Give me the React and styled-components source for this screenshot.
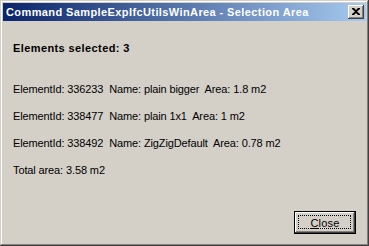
import React from "react";
import styled, { createGlobalStyle } from "styled-components";

const GlobalStyle = createGlobalStyle`
  html, body {
    margin: 0;
    padding: 0;
    background: #d4d0c8;
  }
`;

const Window = styled.div`
  box-sizing: border-box;
  width: 369px;
  height: 246px;
  padding: 3px;
  background: #d4d0c8;
  box-shadow: inset -1px -1px #404040, inset 1px 1px #d4d0c8,
    inset -2px -2px #808080, inset 2px 2px #ffffff;
  display: flex;
  flex-direction: column;
  font-family: "Liberation Sans", Tahoma, sans-serif;
  font-size: 11px;
  color: #000;
`;

const TitleBar = styled.div`
  height: 18px;
  display: flex;
  align-items: center;
  justify-content: space-between;
  padding: 0 2px 0 3px;
  background: linear-gradient(to right, #0a246a, #a6caf0);
`;

const TitleText = styled.span`
  color: #fff;
  font-weight: bold;
  font-size: 11px;
  letter-spacing: 0.4px;
  white-space: nowrap;
`;

const CaptionButton = styled.div`
  box-sizing: border-box;
  width: 16px;
  height: 14px;
  background: #d4d0c8;
  box-shadow: inset -1px -1px #404040, inset 1px 1px #ffffff,
    inset -2px -2px #808080;
  display: flex;
  align-items: center;
  justify-content: center;
  padding: 0 1px 1px 0;
`;

const Body = styled.div`
  flex: 1;
  display: flex;
  flex-direction: column;
  padding: 21px 10px 9px 10px;
`;

const Heading = styled.div`
  font-weight: bold;
  line-height: 13px;
  letter-spacing: 0.4px;
  margin-bottom: 28px;
`;

const Row = styled.div`
  line-height: 13px;
  margin-bottom: 14px;
  letter-spacing: -0.12px;
  white-space: pre;
`;

const Footer = styled.div`
  margin-top: auto;
  display: flex;
  justify-content: flex-end;
`;

const Button = styled.button`
  box-sizing: border-box;
  width: 62px;
  height: 23px;
  padding: 0;
  border: 1px solid #000;
  background: #d4d0c8;
  box-shadow: inset -1px -1px #404040, inset 1px 1px #ffffff,
    inset -2px -2px #808080;
  font-family: inherit;
  font-size: 11px;
  letter-spacing: 0.2px;
  color: #000;
  position: relative;
  display: flex;
  align-items: center;
  justify-content: center;
  &::after {
    content: "";
    position: absolute;
    left: 3px;
    top: 3px;
    right: 4px;
    bottom: 4px;
    border: 1px dotted #000;
  }
`;

const rows = [
  "ElementId: 336233  Name: plain bigger  Area: 1.8 m2",
  "ElementId: 338477  Name: plain 1x1  Area: 1 m2",
  "ElementId: 338492  Name: ZigZigDefault  Area: 0.78 m2",
  "Total area: 3.58 m2",
];

export default function App() {
  return (
    <>
      <GlobalStyle />
      <Window>
        <TitleBar>
          <TitleText>Command SampleExpIfcUtilsWinArea - Selection Area</TitleText>
          <CaptionButton>
            <svg width="8" height="7" viewBox="0 0 8 7">
              <path d="M0 0h2l2 2 2-2h2v1L5 3.5 8 6v1H6L4 5 2 7H0V6l3-2.5L0 1z" fill="#000" />
            </svg>
          </CaptionButton>
        </TitleBar>
        <Body>
          <Heading>Elements selected: 3</Heading>
          {rows.map((r) => (
            <Row key={r}>{r}</Row>
          ))}
          <Footer>
            <Button>
              <span>
                <u>C</u>lose
              </span>
            </Button>
          </Footer>
        </Body>
      </Window>
    </>
  );
}
